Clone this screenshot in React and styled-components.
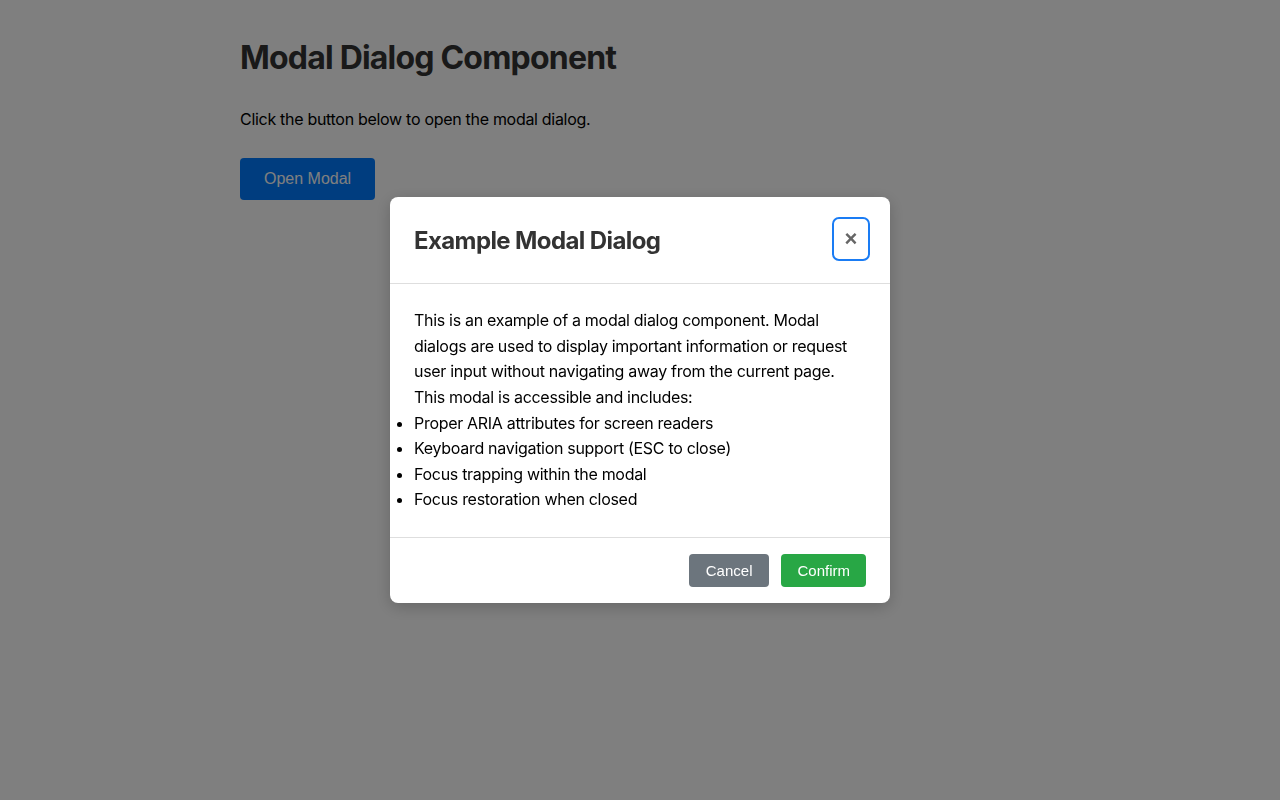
import React from "react";
import styled, { createGlobalStyle } from "styled-components";

const GlobalStyle = createGlobalStyle`
  html, body { margin: 0; padding: 0; background: #fff; }
  body {
    font-family: Inter, "Noto Sans", "Liberation Sans", sans-serif;
    color: #000;
  }
`;

const Page = styled.main`
  max-width: 800px;
  margin: 0 auto;
  padding: 39px 0 40px;
`;

const Heading = styled.h1`
  margin: 0 0 30px;
  font-size: 32px;
  line-height: 38px;
  font-weight: 700;
  color: #333;
  letter-spacing: -0.8px;
`;

const Lead = styled.p`
  margin: 0 0 27px;
  font-size: 16px;
  line-height: 24px;
  letter-spacing: -0.3px;
`;

const Button = styled.button`
  font-family: "Liberation Sans", Arial, sans-serif;
  border: none;
  border-radius: 4px;
  color: #fff;
  cursor: pointer;
  background: ${(p) => p.$bg};
  font-size: ${(p) => (p.$large ? "16px" : "15px")};
  height: ${(p) => (p.$large ? "42px" : "33px")};
  padding: 0 ${(p) => p.$padX}px;
`;

const Overlay = styled.div`
  position: fixed;
  inset: 0;
  background: rgba(0, 0, 0, 0.5);
  display: flex;
  align-items: center;
  justify-content: center;
`;

const Dialog = styled.div`
  width: 500px;
  background: #fff;
  border-radius: 8px;
  box-shadow: 0 4px 16px rgba(0, 0, 0, 0.2);
  overflow: hidden;
`;

const Header = styled.header`
  display: flex;
  align-items: center;
  justify-content: space-between;
  padding: 20px 20px 22px 24px;
  border-bottom: 1px solid #dedede;
`;

const Title = styled.h2`
  margin: 0;
  padding-top: 3px;
  font-size: 24px;
  line-height: 30px;
  font-weight: 700;
  color: #333;
  letter-spacing: -0.6px;
`;

const CloseButton = styled.button`
  width: 38px;
  height: 44px;
  border: 2px solid #1a7cf4;
  border-radius: 7px;
  background: #fff;
  color: #666;
  font-family: "Liberation Sans", Arial, sans-serif;
  font-size: 22px;
  font-weight: 700;
  line-height: 1;
  padding: 0;
  display: flex;
  align-items: center;
  justify-content: center;
  cursor: pointer;
`;

const Body = styled.div`
  padding: 24px;
  font-size: 16px;
  line-height: 25.6px;
  color: #000;
  letter-spacing: -0.3px;
`;

const BodyText = styled.p`
  margin: 0;
`;

const List = styled.ul`
  margin: 0;
  padding: 0;
  list-style: disc outside;
`;

const Footer = styled.footer`
  display: flex;
  justify-content: flex-end;
  gap: 12px;
  padding: 16px 24px;
  border-top: 1px solid #dedede;
`;

const features = [
  "Proper ARIA attributes for screen readers",
  "Keyboard navigation support (ESC to close)",
  "Focus trapping within the modal",
  "Focus restoration when closed",
];

export default function App() {
  return (
    <>
      <GlobalStyle />
      <Page>
        <Heading>Modal Dialog Component</Heading>
        <Lead>Click the button below to open the modal dialog.</Lead>
        <Button $large $padX={24} $bg="#007bff">Open Modal</Button>
      </Page>
      <Overlay>
        <Dialog role="dialog" aria-modal="true" aria-labelledby="modal-title">
          <Header>
            <Title id="modal-title">Example Modal Dialog</Title>
            <CloseButton aria-label="Close">×</CloseButton>
          </Header>
          <Body>
            <BodyText>
              This is an example of a modal dialog component. Modal dialogs are
              used to display important information or request user input
              without navigating away from the current page. This modal is
              accessible and includes:
            </BodyText>
            <List>
              {features.map((f) => (
                <li key={f}>{f}</li>
              ))}
            </List>
          </Body>
          <Footer>
            <Button $padX={17} $bg="#6c757d">Cancel</Button>
            <Button $padX={16} $bg="#28a745">Confirm</Button>
          </Footer>
        </Dialog>
      </Overlay>
    </>
  );
}
